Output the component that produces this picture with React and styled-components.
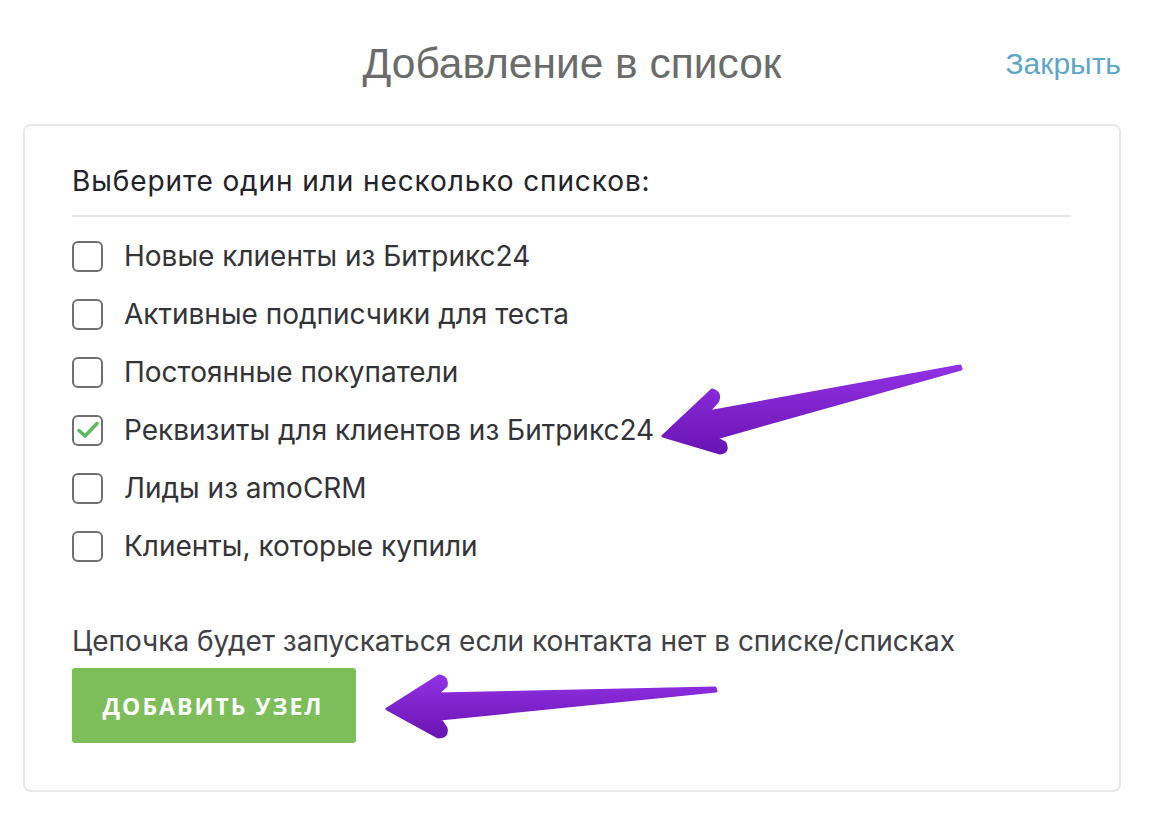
import React from 'react';
import styled, { createGlobalStyle } from 'styled-components';

const GlobalStyle = createGlobalStyle`
  html, body {
    margin: 0;
    padding: 0;
    background: #ffffff;
  }
  body {
    font-family: Inter, "Noto Sans", sans-serif;
    -webkit-font-smoothing: antialiased;
  }
`;

const Page = styled.div`
  position: relative;
  width: 1156px;
  height: 826px;
  padding: 0 35px 0 23px;
  box-sizing: border-box;
`;

const Header = styled.div`
  height: 124px;
  display: grid;
  grid-template-columns: 1fr auto 1fr;
  align-items: center;
`;

const Title = styled.h1`
  grid-column: 2;
  margin: 0;
  font-family: "Liberation Sans", Arial, sans-serif;
  font-weight: 400;
  font-size: 42.5px;
  color: #6b6b6b;
  padding-top: 4px;
`;

const CloseLink = styled.a`
  grid-column: 3;
  justify-self: end;
  font-family: "Liberation Sans", Arial, sans-serif;
  font-size: 30px;
  color: #5ea6c6;
  text-decoration: none;
  cursor: pointer;
  padding-top: 4px;
`;

const Card = styled.div`
  border: 2px solid #e9e9e9;
  border-radius: 8px;
  padding: 39px 48px 48px 47px;
  height: 668px;
  box-sizing: border-box;
`;

const Lead = styled.div`
  font-size: 28px;
  letter-spacing: 0.9px;
  line-height: 32px;
  color: #22222a;
  padding-bottom: 18px;
  border-bottom: 2px solid #e8e8e8;
  margin-bottom: 10px;
`;

const List = styled.div`
  display: flex;
  flex-direction: column;
`;

const Row = styled.label`
  height: 58px;
  display: flex;
  align-items: center;
  gap: 21px;
  font-size: 28px;
  color: #333338;
  cursor: pointer;
`;

const Box = styled.span`
  width: 31px;
  height: 31px;
  box-sizing: border-box;
  border: 2px solid #707070;
  border-radius: 6px;
  display: flex;
  align-items: center;
  justify-content: center;
  flex-shrink: 0;
`;

const Note = styled.div`
  margin-top: 50px;
  font-size: 28px;
  line-height: 32px;
  color: #404045;
`;

const AddButton = styled.button`
  margin-top: 11px;
  width: 284px;
  height: 75px;
  border: none;
  border-radius: 3px;
  background: #7dbe5a;
  color: #ffffff;
  font-family: "Open Sans", "Liberation Sans", sans-serif;
  font-weight: 700;
  font-size: 23px;
  letter-spacing: 2px;
  padding-left: 4px;
  cursor: pointer;
`;

const Overlay = styled.svg`
  position: absolute;
  left: 0;
  top: 0;
  pointer-events: none;
`;

const lists = [
  { name: 'Новые клиенты из Битрикс24' },
  { name: 'Активные подписчики для теста' },
  { name: 'Постоянные покупатели' },
  { name: 'Реквизиты для клиентов из Битрикс24', checked: true },
  { name: 'Лиды из amoCRM' },
  { name: 'Клиенты, которые купили' },
];

const Check = () => (
  <svg width="26" height="26" viewBox="0 0 26 26">
    <path d="M4 13.5 L10 19 L22 6.5" fill="none" stroke="#5cb85c" strokeWidth="3.5" strokeLinecap="round" strokeLinejoin="round" />
  </svg>
);

const Arrows = () => (
  <Overlay width="1156" height="826" viewBox="0 0 1156 826">
    <defs>
      <linearGradient id="arrowFill" x1="0" y1="0" x2="0" y2="1">
        <stop offset="0" stopColor="#9131e3" />
        <stop offset="1" stopColor="#6a14b4" />
      </linearGradient>
    </defs>
    <path
      d="M960 366 L708 412 L717 402 Q722 393 712 390 L663 436 L720 453 Q729 452 725 443 L716 438 L961 369 Z"
      fill="url(#arrowFill)"
      stroke="url(#arrowFill)"
      strokeWidth="3"
      strokeLinejoin="round"
    />
    <path
      d="M715 688 L437 694 L446 686 Q448 677 439 676 L387 709 L438 737 Q448 737 446 728 L440 719 L716 691 Z"
      fill="url(#arrowFill)"
      stroke="url(#arrowFill)"
      strokeWidth="3"
      strokeLinejoin="round"
    />
  </Overlay>
);

export default function App() {
  return (
    <Page>
      <GlobalStyle />
      <Header>
        <Title>Добавление в список</Title>
        <CloseLink>Закрыть</CloseLink>
      </Header>
      <Card>
        <Lead>Выберите один или несколько списков:</Lead>
        <List>
          {lists.map((l) => (
            <Row key={l.name}>
              <Box>{l.checked && <Check />}</Box>
              {l.name}
            </Row>
          ))}
        </List>
        <Note>Цепочка будет запускаться если контакта нет в списке/списках</Note>
        <AddButton>ДОБАВИТЬ УЗЕЛ</AddButton>
      </Card>
      <Arrows />
    </Page>
  );
}
